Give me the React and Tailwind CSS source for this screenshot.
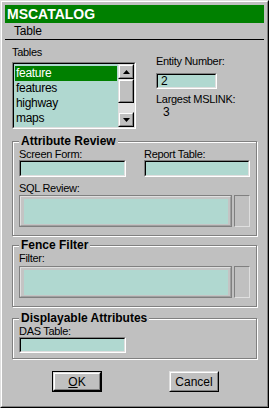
import React from 'react';

const sunkenOuter = 'border border-t-[#808080] border-l-[#808080] border-b-white border-r-white';
const sunkenInner = 'border border-t-black border-l-black border-b-[#dfdfdf] border-r-[#dfdfdf]';
const raisedOuter = 'border border-t-[#dfdfdf] border-l-[#dfdfdf] border-b-black border-r-black';
const raisedInner = 'border border-t-white border-l-white border-b-[#808080] border-r-[#808080]';

function Field({ className = '', children }) {
  return (
    <div className={`${sunkenOuter} ${className}`}>
      <div className={`${sunkenInner} h-full w-full bg-[#b0d8d0] pl-[3px] text-[12px] leading-[13px] text-black`}>
        {children}
      </div>
    </div>
  );
}

function TextBox() {
  return (
    <div className="flex gap-[2px]">
      <div className="h-[32px] flex-1 border border-[#808080] bg-[#c4c4c4]">
        <div className="h-full w-full border border-t-[#dfdfdf] border-l-[#dfdfdf] border-b-[#a0a0a0] border-r-[#a0a0a0] pt-[2px] pl-[3px] pr-[2px] pb-px">
          <div className="h-full w-full bg-[#b0d8d0]" />
        </div>
      </div>
      <div className="h-[32px] w-[16px] border border-t-[#808080] border-l-[#808080] border-b-[#dfdfdf] border-r-[#dfdfdf] bg-[#c0c0c0]" />
    </div>
  );
}

function Group({ title, className = '', children }) {
  return (
    <fieldset className={`border border-[#808080] shadow-[1px_1px_0_#fff,inset_1px_1px_0_#fff] px-[6px] ${className}`}>
      <legend className="bg-[#c0c0c0] px-[2px] text-[12px] font-bold leading-[14px] text-black">{title}</legend>
      {children}
    </fieldset>
  );
}

function Label({ children, className = '' }) {
  return <div className={`text-[11px] leading-[12px] tracking-[-0.3px] text-black ${className}`}>{children}</div>;
}

function ScrollButton({ up }) {
  return (
    <div className={`${raisedOuter} h-[15px] bg-[#c0c0c0]`}>
      <div className={`${raisedInner} flex h-full items-center justify-center`}>
        <svg width="7" height="4" viewBox="0 0 7 4">
          {up ? <path d="M3.5 0 L7 4 L0 4 Z" fill="#000" /> : <path d="M0 0 L7 0 L3.5 4 Z" fill="#000" />}
        </svg>
      </div>
    </div>
  );
}

function Button({ children, isDefault }) {
  const inner = (
    <div className={`${raisedOuter} h-full w-full bg-[#c0c0c0]`}>
      <div className={`${raisedInner} flex h-full items-center justify-center text-[12px] text-black`}>{children}</div>
    </div>
  );
  return isDefault ? (
    <div className="h-[21px] w-[50px] border border-black">{inner}</div>
  ) : (
    <div className="h-[21px] w-[50px]">{inner}</div>
  );
}

export default function App() {
  const tables = ['feature', 'features', 'highway', 'maps'];

  return (
    <div className="h-[408px] w-[269px] border border-t-[#dfdfdf] border-l-[#dfdfdf] border-b-black border-r-black bg-[#c0c0c0] font-['Liberation_Sans',Arial,sans-serif]">
      <div className="h-full w-full border border-t-white border-l-white border-b-[#808080] border-r-[#808080]">
        {/* Title + menu */}
        <div className="px-[3px] pt-[3px]">
          <div className="h-[18px] bg-[#008000] pl-[2px] text-[14px] font-bold leading-[18px] text-white">MSCATALOG</div>
          <div className="h-[16px] pl-[9px] text-[12px] leading-[16px] tracking-[-0.2px] text-black">Table</div>
          <div className="h-px bg-black" />
        </div>

        <div className="px-[10px]">
          {/* Tables + entity */}
          <div className="flex">
            <div>
              <Label className="mt-[6px] leading-[13px]">Tables</Label>
              <div className={`${sunkenOuter} mt-[3px] h-[67px] w-[124px]`}>
                <div className={`${sunkenInner} flex h-full w-full`}>
                  <div className="flex-1 bg-[#b0d8d0] px-px pt-[2px]">
                    {tables.map((t, i) => (
                      <div
                        key={t}
                        className={`h-[15px] pl-px text-[12px] leading-[15px] tracking-[-0.3px] ${i === 0 ? 'bg-[#008000] text-white' : 'text-black'}`}
                      >
                        {t}
                      </div>
                    ))}
                  </div>
                  <div className="flex w-[16px] flex-col">
                    <ScrollButton up />
                    <div className={`${raisedOuter} h-[24px] bg-[#c0c0c0]`}>
                      <div className={`${raisedInner} h-full`} />
                    </div>
                    <div className="flex-1 bg-[#e0e0e0]" />
                    <ScrollButton />
                  </div>
                </div>
              </div>
            </div>
            <div className="ml-[20px] pt-[15px]">
              <Label className="leading-[13px]">Entity Number:</Label>
              <Field className="mt-[5px] h-[16px] w-[61px]">2</Field>
              <Label className="mt-[4px] leading-[13px]">Largest MSLINK:</Label>
              <div className="ml-[7px] text-[12px] leading-[13px] text-black">3</div>
            </div>
          </div>

          {/* Attribute Review */}
          <Group title="Attribute Review" className="mt-[5px] pb-[8px]">
            <div className="flex gap-[18px]">
              <div className="w-[107px]">
                <Label>Screen Form:</Label>
                <Field className="h-[17px]" />
              </div>
              <div className="flex-1">
                <Label>Report Table:</Label>
                <Field className="h-[17px]" />
              </div>
            </div>
            <Label className="mt-[5px]">SQL Review:</Label>
            <div className="mt-px">
              <TextBox />
            </div>
          </Group>

          {/* Fence Filter */}
          <Group title="Fence Filter" className="mt-[2px] pb-[8px]">
            <Label>Filter:</Label>
            <div className="mt-[2px]">
              <TextBox />
            </div>
          </Group>

          {/* Displayable Attributes */}
          <Group title="Displayable Attributes" className="mt-[4px] pb-[5px]">
            <Label className="leading-[11px]">DAS Table:</Label>
            <Field className="h-[16px] w-[107px]" />
          </Group>

          <div className="mt-[12px] flex pl-[40px]">
            <Button isDefault>
              <span className="underline">O</span>K
            </Button>
            <div className="ml-[67px]">
              <Button>Cancel</Button>
            </div>
          </div>
        </div>
      </div>
    </div>
  );
}
